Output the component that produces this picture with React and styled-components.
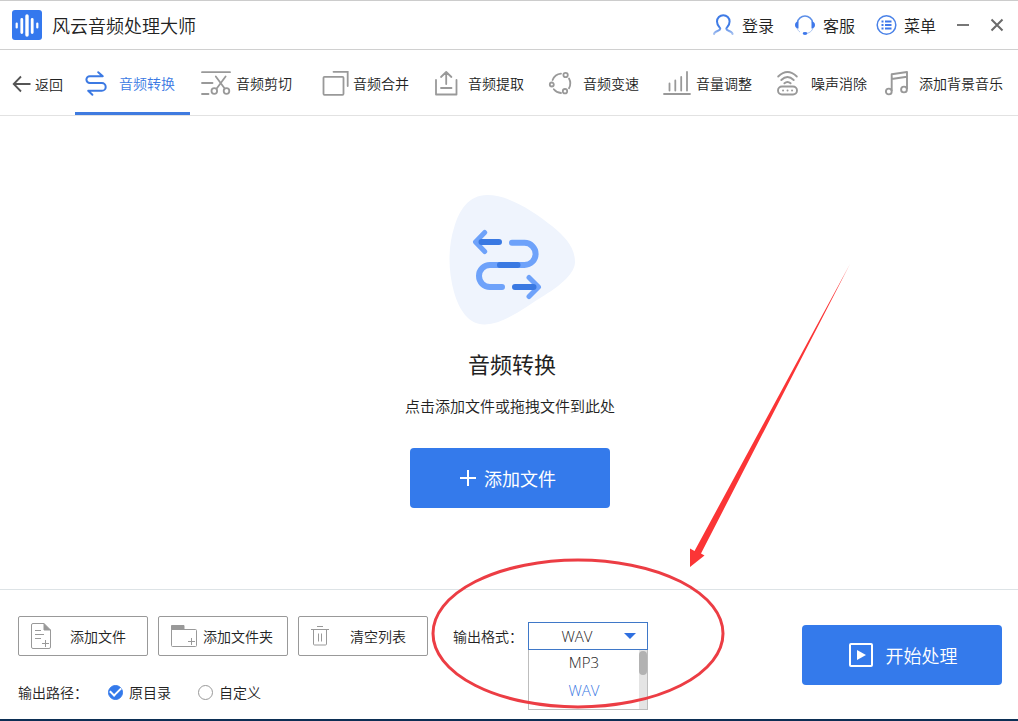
import React, { useState } from "react";
import styled, { createGlobalStyle } from "styled-components";

const GlobalStyle = createGlobalStyle`
  * {
    box-sizing: border-box;
  }

  body {
    margin: 0;
    background: #ffffff;
    color: #222222;
    font-family: "Noto Sans CJK SC", sans-serif;
    font-size: 14px;
    font-weight: 350;
    line-height: 20px;
  }

  button,
  input,
  select {
    margin: 0;
    color: inherit;
    font: inherit;
  }

  svg {
    display: block;
    flex: none;
    fill: none;
    overflow: visible;
  }
`;

const Window = styled.div`
  border-top: 1px solid #cccccc;
  display: flex;
  flex-direction: column;
  min-height: 100vh;
  overflow: hidden;
`;

/* ---------- title bar ---------- */

const TitleBar = styled.header`
  align-items: center;
  border-bottom: 1px solid #d0d0d0;
  display: flex;
  height: 49px;
  justify-content: space-between;
  padding: 0 14px 0 12px;
`;

const Brand = styled.div`
  align-items: center;
  display: flex;
  gap: 10px;
`;

const BrandName = styled.h1`
  font-size: 18px;
  font-weight: 350;
  line-height: 24px;
  margin: 0;
`;

const TitleActions = styled.div`
  align-items: center;
  display: flex;
  gap: 20px;
`;

const TitleButton = styled.button`
  align-items: center;
  background: none;
  border: 0;
  cursor: pointer;
  display: flex;
  font-size: 16px;
  gap: 7px;
  line-height: 24px;
  padding: 0;
`;

/* ---------- tool tabs ---------- */

const Toolbar = styled.nav`
  border-bottom: 1px solid #e2e2e2;
  display: flex;
  height: 66px;
`;

const BackButton = styled.button`
  align-items: center;
  background: none;
  border: 0;
  cursor: pointer;
  display: flex;
  flex: none;
  gap: 4px;
  padding: 2px 12px 0;
  white-space: nowrap;
`;

const Tab = styled.button`
  align-items: center;
  background: none;
  border: 0;
  border-bottom: 3px solid ${(p) => (p.$active ? "#3f7be0" : "transparent")};
  color: ${(p) => (p.$active ? "#3b79e3" : "#222222")};
  cursor: pointer;
  display: flex;
  flex: none;
  gap: ${(p) => (p.$compact ? "5px" : "12px")};
  padding: 4px 15px 0 10px;
  white-space: nowrap;

  svg {
    stroke: ${(p) => (p.$active ? "#3b79e3" : "#999999")};
  }

  &:last-child {
    padding-left: 3px;
    padding-right: 12px;
  }
`;

/* ---------- drop area ---------- */

const DropArea = styled.main`
  align-items: center;
  display: flex;
  flex: 1;
  flex-direction: column;
  padding: 79px 0 81px 2px;
`;

const Hero = styled.div`
  align-items: center;
  display: flex;
  flex-direction: column;
  gap: 22px;
  padding-left: 4px;
`;

const HeroTitle = styled.h2`
  font-size: 22px;
  font-weight: 400;
  line-height: 32px;
  margin: 0;
`;

const HeroHint = styled.p`
  font-size: 15px;
  line-height: 24px;
  margin: 15px 0 30px;
`;

const PrimaryButton = styled.button`
  align-items: center;
  background: #347aeb;
  border: 0;
  border-radius: 4px;
  color: #ffffff;
  cursor: pointer;
  display: flex;
  font-size: 18px;
  height: 60px;
  justify-content: center;
  width: 200px;
`;

const AddButton = styled(PrimaryButton)`
  font-weight: 400;
  gap: 8px;
  padding: 0 4px 0 0;
`;

const StartButton = styled(PrimaryButton)`
  gap: 13px;
  margin: 9px 0 0 auto;
  padding: 0 0 0 2px;
`;

/* ---------- bottom bar ---------- */

const BottomBar = styled.footer`
  align-items: flex-start;
  border-bottom: 2px solid #0c2f55;
  border-top: 1px solid #dde3e6;
  display: flex;
  padding: 26px 16px 17px 18px;
`;

const FileColumn = styled.div`
  display: flex;
  flex-direction: column;
  gap: 26px;
`;

const ButtonRow = styled.div`
  display: flex;
  gap: 10px;
`;

const OutlineButton = styled.button`
  align-items: center;
  background: #ffffff;
  border: 1px solid #999999;
  border-radius: 2px;
  cursor: pointer;
  display: grid;
  grid-template-columns: 26px 1fr;
  height: 40px;
  padding: 0 8px 0 12px;
  width: 130px;

  svg {
    stroke: #999999;
  }
`;

const PathRow = styled.div`
  align-items: center;
  display: flex;
  gap: 27px;
`;

const PathCaption = styled.span`
  white-space: nowrap;
  width: 63px;
`;

const RadioLabel = styled.label`
  align-items: center;
  cursor: pointer;
  display: flex;
  gap: 6px;
`;

const Radio = styled.input`
  appearance: none;
  background: #ffffff;
  border: 1px solid #999999;
  border-radius: 50%;
  display: grid;
  height: 15px;
  place-items: center;
  width: 15px;

  &:checked {
    background: #347aeb;
    border-color: #347aeb;
  }

  &:checked::after {
    border: solid #ffffff;
    border-width: 0 0 2px 2px;
    content: "";
    height: 5px;
    margin-bottom: 3px;
    transform: rotate(-45deg);
    width: 9px;
  }
`;

const FormatField = styled.div`
  align-items: center;
  display: flex;
  gap: 5px;
  margin: 6px 0 0 25px;
  position: relative;
  white-space: nowrap;
`;

const Combo = styled.div`
  position: relative;
  width: 120px;
`;

const ComboSelect = styled.select`
  appearance: none;
  background: #ffffff;
  border: 1px solid #3f78c8;
  border-radius: 0;
  display: block;
  font-family: "Open Sans", "Noto Sans CJK SC", sans-serif;
  font-size: 15px;
  height: 28px;
  outline: none;
  padding: 0 22px 0 0;
  text-align-last: center;
  width: 100%;
`;

const ComboArrow = styled.span`
  border: 6px solid transparent;
  border-bottom: 0;
  border-top-color: #2f6fe0;
  pointer-events: none;
  position: absolute;
  right: 12px;
  top: 11px;
`;

const ComboList = styled.div`
  background: #ffffff;
  border: 1px solid #bdbdbd;
  border-top: 0;
  display: flex;
  height: 60px;
  left: 0;
  overflow: hidden;
  position: absolute;
  right: 0;
  top: 28px;
`;

const ComboOptions = styled.ul`
  flex: 1;
  font-family: "Open Sans", "Noto Sans CJK SC", sans-serif;
  font-size: 15px;
  list-style: none;
  margin: 0;
  padding: 0;
  text-align: center;
`;

const ComboOption = styled.li`
  color: ${(p) => (p.$selected ? "#3b79e3" : "#222222")};
  cursor: pointer;
  height: 28px;
  line-height: 24px;
`;

const ScrollTrack = styled.div`
  background: #e4e4e4;
  padding-top: 1px;
  width: 8px;
`;

const ScrollThumb = styled.div`
  background: #b2b2b2;
  border-radius: 4px;
  height: 24px;
`;

/* hand-drawn marks that point at the format picker */
const Marks = styled.svg`
  left: -23px;
  pointer-events: none;
  position: absolute;
  top: -362px;
`;

/* ---------- drawings ---------- */

const Logo = () => (
  <svg width="30" height="30" viewBox="0 0 30 30">
    <rect width="30" height="30" rx="3" fill="#3478ee" />
    <g stroke="#ffffff" strokeLinecap="round">
      <path d="M4.7 13.5v4M25.3 13.5v4" strokeWidth="2.2" />
      <path d="M9.8 9.5v13M20.2 9.5v13" strokeWidth="2.8" />
      <path d="M15 6v19" strokeWidth="3.4" />
    </g>
  </svg>
);

const UserIcon = () => (
  <svg width="22" height="22" viewBox="0 0 22 22">
    <defs>
      <linearGradient id="user" x1="0" y1="0" x2="0" y2="1">
        <stop offset="0.6" stopColor="#3f7be6" />
        <stop offset="1" stopColor="#a9c3f0" />
      </linearGradient>
    </defs>
    <path
      d="M1 20c.6-3.4 6.3-2.6 6.3-5.2 0-1.4-3.3-2.8-3.3-7.3a6.3 6.3 0 0 1 12.6 0c0 4.5-3.3 5.9-3.3 7.3 0 2.6 5.7 1.800 6.3 5.2"
      stroke="url(#user)"
      strokeWidth="2"
      strokeLinecap="round"
    />
  </svg>
);

const ServiceIcon = () => (
  <svg width="22" height="22" viewBox="0 0 22 22">
    <path d="M3.400 8.500a7.700 7.700 0 0 1 15.200 0" stroke="#5b8ee8" strokeWidth="1.500" />
    <path d="M19 14c-1 3-3 4.700-6 5.300M3 14c.8 2 1.800 3.300 3 4" stroke="#a9c3f0" strokeWidth="1" />
    <path
      d="M4.500 7.500v7C2.300 14.500 1 13 1 11s1.300-3.500 3.500-3.500zM17.500 7.500v7c2.200 0 3.500-1.500 3.500-3.500s-1.300-3.500-3.500-3.500z"
      fill="#3f78ea"
    />
    <ellipse cx="11" cy="19.500" rx="2.300" ry="1.400" fill="#3f78ea" />
  </svg>
);

const MenuIcon = () => (
  <svg width="22" height="22" viewBox="0 0 22 22">
    <circle cx="11.500" cy="11" r="9.300" stroke="#4a82e8" strokeWidth="1.500" />
    <path
      d="M6.500 7.500h2M6.500 11h2M6.500 14.500h2M10 7.500h6.500M10 11h6.500M10 14.500h6.500"
      stroke="#3f78ea"
      strokeWidth="1.900"
    />
  </svg>
);

const MinimizeIcon = () => (
  <svg width="14" height="14" viewBox="0 0 14 14">
    <path d="M1 7h12" stroke="#777777" strokeWidth="2" />
  </svg>
);

const CloseIcon = () => (
  <svg width="14" height="14" viewBox="0 0 14 14">
    <path d="M1.500 1.500l11 11M12.500 1.500l-11 11" stroke="#6a6a6a" strokeWidth="2" />
  </svg>
);

const BackIcon = () => (
  <svg width="19" height="18" viewBox="0 0 19 18">
    <path d="M18.500 9H2M9 1.500L1.700 9L9 16.500" stroke="#555555" strokeWidth="1.800" />
  </svg>
);

const ConvertIcon = () => (
  <svg width="22" height="25" viewBox="0 0 22 25" strokeWidth="2" strokeLinecap="round" strokeLinejoin="round">
    <path d="M13.200 1.200l4.600 4H4.800a3.400 3.400 0 0 0 0 6.800h12a3.900 3.900 0 0 1 0 7.800H3.200l4.200 4" />
  </svg>
);

const CutIcon = () => (
  <svg width="31" height="25" viewBox="-1 0 31 25" strokeWidth="1.800" strokeLinecap="round">
    <path d="M1 1.200h28M1 12h10.500M1 23h6.500" />
    <path d="M14.800 5.500l8.900 12M24.600 5.500l-8.900 12" />
    <circle cx="13.300" cy="20" r="2.800" />
    <circle cx="25.500" cy="20" r="2.800" />
  </svg>
);

const MergeIcon = () => (
  <svg width="31" height="25" viewBox="0 0 31 25" strokeWidth="1.800" strokeLinecap="round">
    <rect x="6.500" y="5.800" width="20" height="18" rx="1" />
    <path d="M16.500 .8h14.200V15" />
  </svg>
);

const ExtractIcon = () => (
  <svg width="22" height="25" viewBox="-1 0 22 25" strokeWidth="1.800" strokeLinecap="round" strokeLinejoin="round">
    <path d="M1 9v14.500h20.500V9M6 17h10.500M11.200 13V1.200M6 6l5.200-5L16.400 6" />
  </svg>
);

const SpeedIcon = () => (
  <svg width="22" height="25" viewBox="0 0 22 25" strokeWidth="1.800" strokeLinecap="round">
    <path d="M3.600 9a10 10 0 0 1 8.400-6.300M20 7.500a10 10 0 0 1 0 9.700M4.800 18.300a10 10 0 0 0 7.200 3.700" />
    <circle cx="2.800" cy="13.500" r="2" />
    <circle cx="16.600" cy="4" r="2.200" />
    <circle cx="16" cy="20.200" r="2.200" />
  </svg>
);

const VolumeIcon = () => (
  <svg width="27" height="25" viewBox="1 0 27 25" strokeWidth="1.800" strokeLinecap="round">
    <path d="M1 23h26M6.500 12.500v7M12.300 9.500v10M18.200 6v13.500M24 1v18.500" />
  </svg>
);

const NoiseIcon = () => (
  <svg width="22" height="25" viewBox="0 0 22 25" strokeWidth="1.900" strokeLinecap="round">
    <path d="M1.200 5.500q9.300-9 18.600 0M4.300 9q6.200-6 12.400 0M7.400 12.300q3.100-2.800 6.200 0" />
    <rect x="1" y="15.500" width="19" height="8" rx="4" />
    <path d="M6 19.500h.1M10.500 19.500h.1M15 19.500h.1" />
  </svg>
);

const MusicIcon = () => (
  <svg width="22" height="25" viewBox="0 0 22 25" strokeWidth="1.900" strokeLinejoin="round">
    <path d="M6.700 20V3.300L22 1v17M6.700 8L22 5.700" />
    <circle cx="3.800" cy="20.500" r="2.900" />
    <circle cx="19" cy="18.500" r="2.900" />
  </svg>
);

const HeroArt = () => (
  <svg width="126" height="130" viewBox="0 0 126 130">
    <path
      d="M38 0C60 0 84 16 103 31C118 43 126 54 126 67C126 78 112 90 96 100C76 112 56 129 36 129.500C20 130 10 115 5 97C-1 76-1 52 5 33C10 15 20 0 38 0Z"
      fill="#eff4fd"
    />
    <g strokeWidth="6" strokeLinecap="round" strokeLinejoin="round">
      <g stroke="#6ea2fa" strokeWidth="5">
        <path d="M35.700 37.500L26.500 47L35.700 56.500M80 82.500L89.500 92L80 101.500" />
      </g>
      <path
        d="M63 47.800h12.500a11.100 11.100 0 0 1 0 22.200H41a11 11 0 0 0 0 22h12"
        stroke="#6ea2fa"
      />
      <path d="M32.500 47H50M51 70h17.500M66 92h18.500" stroke="#3a79e2" />
    </g>
  </svg>
);

const PlusIcon = () => (
  <svg width="16" height="16" viewBox="0 0 16 16">
    <path d="M8 0v16M0 8h16" stroke="#ffffff" strokeWidth="2" />
  </svg>
);

const FileIcon = () => (
  <svg width="20" height="26" viewBox="0 0 20 26">
    <path d="M13 .5H2a1.500 1.500 0 0 0-1.500 1.500v22A1.500 1.500 0 0 0 2 25.500h16a1.500 1.500 0 0 0 1.500-1.500V7" />
    <path d="M13 .5v6.500h6.500z" fill="#999999" />
    <path d="M4 7.500h6M4 11.500h9M4 15.500h6M14.500 17v7M11 20.500h7" />
  </svg>
);

const FolderIcon = () => (
  <svg width="26" height="22" viewBox="0 0 26 22">
    <path d="M.5 4.500h24a1 1 0 0 1 1 1v15a1 1 0 0 1-1 1h-23a1 1 0 0 1-1-1z" />
    <path d="M.5.500h12.500v4H.5z" fill="#999999" />
    <path d="M20.500 13v7M17 16.500h7" />
  </svg>
);

const TrashIcon = () => (
  <svg width="18" height="20" viewBox="0 0 18 20">
    <path d="M0 3.500h18M6 .5h6M2.500 3.500v14.500a1 1 0 0 0 1 1h11a1 1 0 0 0 1-1V3.500M7.500 7.500v8M10.500 7.500v8" />
  </svg>
);

const PlayIcon = () => (
  <svg width="24" height="24" viewBox="0 0 24 24">
    <rect x="1" y="1" width="22" height="22" rx="1" stroke="#ffffff" strokeWidth="2" />
    <path d="M8 7l9 5l-9 5z" fill="#ffffff" />
  </svg>
);

/* ---------- app ---------- */

const TABS = [
  { label: "音频转换", icon: ConvertIcon },
  { label: "音频剪切", icon: CutIcon, compact: true },
  { label: "音频合并", icon: MergeIcon, compact: true },
  { label: "音频提取", icon: ExtractIcon },
  { label: "音频变速", icon: SpeedIcon },
  { label: "音量调整", icon: VolumeIcon, compact: true },
  { label: "噪声消除", icon: NoiseIcon },
  { label: "添加背景音乐", icon: MusicIcon },
];

const FORMATS = ["MP3", "WAV"];

const App = () => {
  const [tab, setTab] = useState("音频转换");
  const [format, setFormat] = useState("WAV");
  const [path, setPath] = useState("source");

  return (
    <Window>
      <GlobalStyle />

      <TitleBar>
        <Brand>
          <Logo />
          <BrandName>风云音频处理大师</BrandName>
        </Brand>
        <TitleActions>
          <TitleButton>
            <UserIcon />
            登录
          </TitleButton>
          <TitleButton>
            <ServiceIcon />
            客服
          </TitleButton>
          <TitleButton>
            <MenuIcon />
            菜单
          </TitleButton>
          <TitleButton aria-label="最小化">
            <MinimizeIcon />
          </TitleButton>
          <TitleButton aria-label="关闭">
            <CloseIcon />
          </TitleButton>
        </TitleActions>
      </TitleBar>

      <Toolbar>
        <BackButton>
          <BackIcon />
          返回
        </BackButton>
        {TABS.map(({ label, icon: Icon, compact }) => (
          <Tab
            key={label}
            $active={tab === label}
            $compact={compact}
            onClick={() => setTab(label)}
          >
            <Icon />
            {label}
          </Tab>
        ))}
      </Toolbar>

      <DropArea>
        <Hero>
          <HeroArt />
          <HeroTitle>音频转换</HeroTitle>
        </Hero>
        <HeroHint>点击添加文件或拖拽文件到此处</HeroHint>
        <AddButton>
          <PlusIcon />
          添加文件
        </AddButton>
      </DropArea>

      <BottomBar>
        <FileColumn>
          <ButtonRow>
            <OutlineButton>
              <FileIcon />
              <span>添加文件</span>
            </OutlineButton>
            <OutlineButton>
              <FolderIcon />
              <span>添加文件夹</span>
            </OutlineButton>
            <OutlineButton>
              <TrashIcon />
              <span>清空列表</span>
            </OutlineButton>
          </ButtonRow>
          <PathRow role="radiogroup" aria-labelledby="path-caption">
            <PathCaption id="path-caption">输出路径：</PathCaption>
            <RadioLabel>
              <Radio
                type="radio"
                name="path"
                checked={path === "source"}
                onChange={() => setPath("source")}
              />
              原目录
            </RadioLabel>
            <RadioLabel>
              <Radio
                type="radio"
                name="path"
                checked={path === "custom"}
                onChange={() => setPath("custom")}
              />
              自定义
            </RadioLabel>
          </PathRow>
        </FileColumn>

        <FormatField>
          <label htmlFor="format">输出格式：</label>
          <Combo>
            <ComboSelect
              id="format"
              value={format}
              onChange={(e) => setFormat(e.target.value)}
            >
              {FORMATS.map((name) => (
                <option key={name}>{name}</option>
              ))}
            </ComboSelect>
            <ComboArrow />
            <ComboList>
              <ComboOptions role="listbox" aria-label="输出格式">
                {FORMATS.map((name) => (
                  <ComboOption
                    key={name}
                    role="option"
                    aria-selected={format === name}
                    $selected={format === name}
                    onClick={() => setFormat(name)}
                  >
                    {name}
                  </ComboOption>
                ))}
              </ComboOptions>
              <ScrollTrack>
                <ScrollThumb />
              </ScrollTrack>
            </ComboList>
          </Combo>
          <Marks width="430" height="455" viewBox="430 260 430 455" aria-hidden="true">
            <ellipse cx="578" cy="633.500" rx="145" ry="73.500" stroke="#ec3d44" strokeWidth="3" />
            <path d="M850 264L694.500 551L690 548.500V567L704.500 555.500L701 553.500Z" fill="#fb3536" />
          </Marks>
        </FormatField>

        <StartButton>
          <PlayIcon />
          开始处理
        </StartButton>
      </BottomBar>
    </Window>
  );
};

export default App;
